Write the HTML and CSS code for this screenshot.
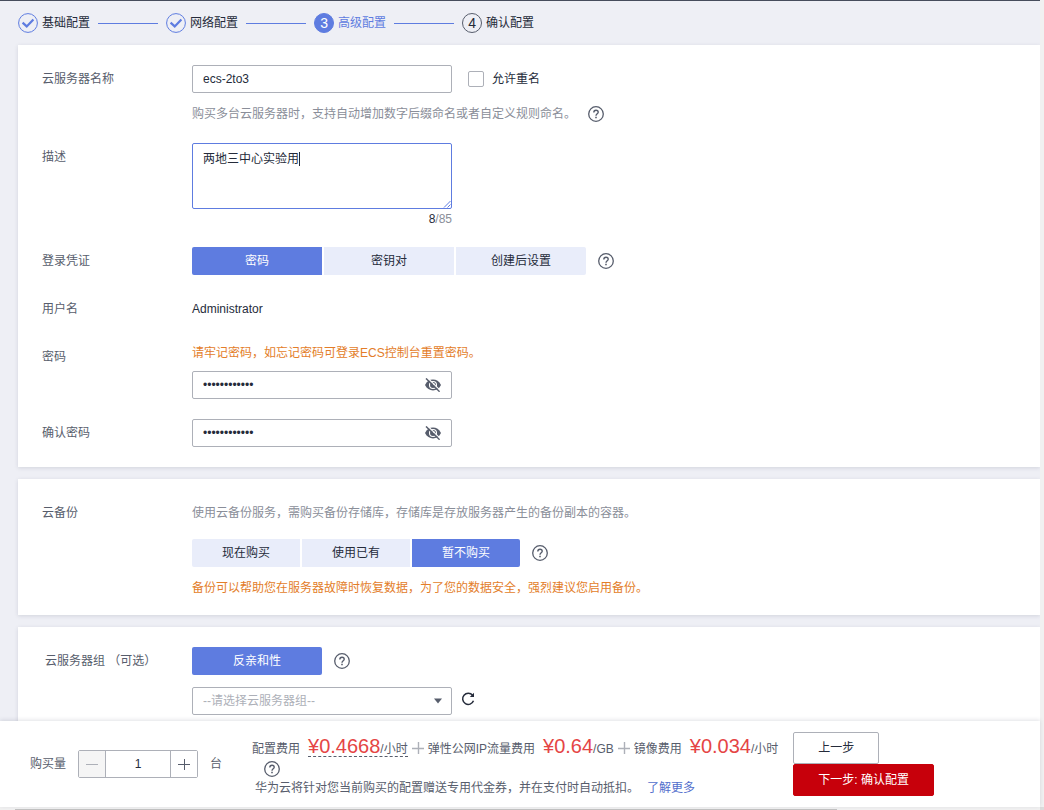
FILE: index.html
```html
<!DOCTYPE html>
<html lang="zh-CN">
<head>
<meta charset="utf-8">
<title>高级配置</title>
<link rel="stylesheet" href="styles.css">
</head>
<body>
<svg class="sprite" aria-hidden="true">
  <symbol id="help" viewBox="0 0 16 16">
    <circle cx="8" cy="8" r="7.3" fill="none" stroke="currentColor" stroke-width="1.3"/>
    <path d="M5.8 6.4C5.8 5 6.7 4.2 8 4.2S10.200 5 10.200 6.200C10.200 7.700 8 7.800 8 9.700" fill="none" stroke="currentColor" stroke-width="1.4"/>
    <path d="M7.200 10.800h1.600v1.500H7.200z" fill="currentColor"/>
  </symbol>
  <symbol id="check" viewBox="0 0 20 20">
    <circle cx="10" cy="10" r="9.400" fill="none" stroke="currentColor" stroke-width="1"/>
    <path d="M4.600 9.600L8.700 13.400L15.400 6.400" fill="none" stroke="currentColor" stroke-width="2.200"/>
  </symbol>
  <symbol id="eye-off" viewBox="0 0 16 14">
    <path d="M0 7C1.800 3.300 4.700 1.600 8 1.600S14.200 3.300 16 7C14.200 10.700 11.300 12.400 8 12.400S1.800 10.700 0 7z" fill="currentColor"/>
    <circle cx="8" cy="7" r="3.500" fill="none" stroke="#fff" stroke-width="1.100"/>
    <circle cx="8.800" cy="6.200" r="1" fill="#fff"/>
    <path d="M2.600 0L15.400 12.600" stroke="#fff" stroke-width="1.200"/>
    <path d="M1 .4L14.600 13.700" stroke="currentColor" stroke-width="1.400"/>
  </symbol>
</svg>
<div class="screen">
  <div class="view">
    <main class="content">
      <ol class="steps">
        <li class="step"><svg class="step-icon"><use href="#check"/></svg>基础配置</li>
        <li class="step"><svg class="step-icon"><use href="#check"/></svg>网络配置</li>
        <li class="step step-current"><span class="step-number">3</span>高级配置</li>
        <li class="step step-next"><span class="step-number">4</span>确认配置</li>
      </ol>

      <section class="card">
        <div class="row row-tight">
          <label class="label" for="name">云服务器名称</label>
          <div class="field">
            <div class="line">
              <input class="input" id="name" type="text" value="ecs-2to3">
              <input class="checkbox" id="dup" type="checkbox">
              <label class="checkbox-label" for="dup">允许重名</label>
            </div>
            <p class="hint">购买多台云服务器时，支持自动增加数字后缀命名或者自定义规则命名。<svg class="help"><use href="#help"/></svg></p>
          </div>
        </div>
        <div class="row row-tight">
          <label class="label" for="desc">描述</label>
          <div class="field">
            <div class="textarea-box">
              <textarea class="textarea" id="desc">两地三中心实验用</textarea>
              <span class="caret"></span>
              <svg class="grip" viewBox="0 0 8 8"><path d="M1 7.500L7.500 1M4.500 7.500L7.500 4.500" stroke="#5e7ce0" fill="none"/></svg>
            </div>
            <p class="counter"><span class="count">8</span>/85</p>
          </div>
        </div>
        <div class="row">
          <span class="label">登录凭证</span>
          <div class="field line">
            <div class="segments">
              <button class="segment segment-wide segment-on" type="button">密码</button>
              <button class="segment segment-wide" type="button">密钥对</button>
              <button class="segment segment-wide" type="button">创建后设置</button>
            </div>
            <svg class="help"><use href="#help"/></svg>
          </div>
        </div>
        <div class="row">
          <span class="label">用户名</span>
          <div class="field value">Administrator</div>
        </div>
        <div class="row">
          <label class="label" for="pwd">密码</label>
          <div class="field">
            <p class="warn warn-top">请牢记密码，如忘记密码可登录ECS控制台重置密码。</p>
            <div class="password">
              <input class="input" id="pwd" type="password" value="Abcdef123456">
              <svg class="eye"><use href="#eye-off"/></svg>
            </div>
          </div>
        </div>
        <div class="row">
          <label class="label" for="pwd2">确认密码</label>
          <div class="field">
            <div class="password">
              <input class="input" id="pwd2" type="password" value="Abcdef123456">
              <svg class="eye"><use href="#eye-off"/></svg>
            </div>
          </div>
        </div>
      </section>

      <section class="card card-backup">
        <div class="row">
          <span class="label">云备份</span>
          <div class="field">
            <p class="intro">使用云备份服务，需购买备份存储库，存储库是存放服务器产生的备份副本的容器。</p>
            <div class="line">
              <div class="segments">
                <button class="segment" type="button">现在购买</button>
                <button class="segment" type="button">使用已有</button>
                <button class="segment segment-on" type="button">暂不购买</button>
              </div>
              <svg class="help"><use href="#help"/></svg>
            </div>
            <p class="hint warn">备份可以帮助您在服务器故障时恢复数据，为了您的数据安全，强烈建议您启用备份。</p>
          </div>
        </div>
      </section>

      <section class="card">
        <div class="row">
          <label class="label label-indent" for="group">云服务器组 （可选）</label>
          <div class="field">
            <div class="line group-policy">
              <button class="segment segment-wide segment-on" type="button">反亲和性</button>
              <svg class="help"><use href="#help"/></svg>
            </div>
            <div class="line">
              <div class="select-box">
                <select class="input select" id="group"><option>--请选择云服务器组--</option></select>
                <svg class="arrow" viewBox="0 0 8 6"><path d="M0 .5h8L4 5.500z" fill="#575d6c"/></svg>
              </div>
              <button class="refresh" type="button" aria-label="刷新"><svg viewBox="0 0 14 14"><path d="M11.600 3.300A5.600 5.600 0 1 0 12.500 8.800" fill="none" stroke="#252b3a" stroke-width="1.500"/><path d="M13 .8V5H8.800z" fill="#252b3a"/></svg></button>
            </div>
          </div>
        </div>
      </section>
    </main>

    <footer class="footer">
      <div class="quantity">
        <label for="qty">购买量</label>
        <div class="stepper">
          <button class="stepper-button stepper-off" type="button" aria-label="减少"><svg viewBox="0 0 12 12"><path d="M0 6.500h12" stroke="#adb0b8" stroke-width="1"/></svg></button>
          <input class="stepper-input" id="qty" type="text" value="1">
          <button class="stepper-button" type="button" aria-label="增加"><svg viewBox="0 0 12 12"><path d="M0 6.500h12M6.500 1v11" stroke="#575d6c" stroke-width="1"/></svg></button>
        </div>
        <span>台</span>
      </div>
      <div class="costs">
        <div class="prices">
          <span class="price-name">配置费用</span><span class="price price-detail"><span class="amount">¥0.4668</span>/小时</span>
          <svg class="plus" viewBox="0 0 12 12"><path d="M0 6.500h12M6.500 0v12" stroke="#adb0b8" stroke-width="1.400"/></svg>
          <span class="price-name">弹性公网IP流量费用</span><span class="price"><span class="amount">¥0.64</span>/GB</span>
          <svg class="plus" viewBox="0 0 12 12"><path d="M0 6.500h12M6.500 0v12" stroke="#adb0b8" stroke-width="1.400"/></svg>
          <span class="price-name">镜像费用</span><span class="price"><span class="amount">¥0.034</span>/小时</span>
        </div>
        <svg class="help costs-help"><use href="#help"/></svg>
        <p class="coupon">华为云将针对您当前购买的配置赠送专用代金券，并在支付时自动抵扣。<a class="link" href="#more">了解更多</a></p>
      </div>
      <div class="actions">
        <button class="action" type="button">上一步</button>
        <button class="action action-primary" type="button">下一步: 确认配置</button>
      </div>
    </footer>
  </div>
  <div class="scroll-y"></div>
  <div class="scroll-x"><div class="thumb"></div></div>
  <div class="scroll-corner"></div>
</div>
</body>
</html>
```
FILE: styles.css
```css
* { box-sizing: border-box; }

body {
  margin: 0;
  background: #eeeff5;
  color: #252b3a;
  font-family: "Liberation Sans", "Noto Sans CJK SC", sans-serif;
  font-size: 12px;
  line-height: 20px;
}

p, ol { margin: 0; padding: 0; }

button, input, textarea, select {
  margin: 0;
  font: inherit;
  color: inherit;
  outline: none;
}

svg { display: block; flex: none; }

.sprite { position: absolute; width: 0; height: 0; }

/* Page frame */
.screen {
  display: grid;
  grid-template-columns: minmax(0, 1fr) 4px;
  grid-template-rows: minmax(0, 1fr) 3px;
  height: 100vh;
}

.view {
  display: flex;
  flex-direction: column;
  border-top: 1px solid #464c5c;
}

.content {
  flex: 1;
  min-height: 0;
  overflow: hidden;
  padding: 12px 0 0 18px;
}

.scroll-y { background: #f1f1f1; }
.scroll-x { padding-top: 2px; background: #f1f1f1; }
.thumb { width: 79%; height: 1px; margin-left: 15px; background: #c1c1c1; }
.scroll-corner { background: #dcdcdc; }

/* Steps */
.steps {
  display: flex;
  margin-bottom: 12px;
  list-style: none;
}

.step { display: flex; align-items: center; gap: 4px; }

.step:not(:last-child)::after {
  content: "";
  width: 60px;
  height: 1px;
  margin: 0 8px 0 4px;
  background: #5e7ce0;
}

.step-icon { width: 20px; height: 20px; color: #5e7ce0; }

.step-number {
  width: 20px;
  height: 20px;
  border: 1px solid #575d6c;
  border-radius: 50%;
  font-size: 14px;
  line-height: 18px;
  text-align: center;
}

.step-current { color: #5e7ce0; }
.step-current .step-number { border-color: #5e7ce0; background: #5e7ce0; color: #fff; }

/* Cards and form rows */
.card {
  margin-bottom: 12px;
  padding: 20px 24px;
  background: #fff;
  box-shadow: 0 1px 4px rgba(40, 50, 80, 0.14);
}

.card-backup { padding-bottom: 16px; }

.row { display: flex; margin-bottom: 20px; }
.row-tight { margin-bottom: 18px; }
.row:last-child { margin-bottom: 0; }

.label { flex: none; width: 150px; color: #575d6c; line-height: 28px; }
.label-indent { padding-left: 3px; }
.field { flex: 1; min-width: 0; }
.line { display: flex; align-items: center; }
.value { line-height: 28px; }

.input {
  display: block;
  width: 260px;
  height: 28px;
  padding: 0 10px;
  border: 1px solid #adb0b8;
  border-radius: 2px;
  background: #fff;
}

.checkbox {
  width: 16px;
  height: 16px;
  margin-left: 16px;
  border: 1px solid #adb0b8;
  border-radius: 2px;
  background: #fff;
  appearance: none;
}

.checkbox-label { margin-left: 8px; }

.hint {
  display: flex;
  align-items: center;
  margin-top: 10px;
  color: #8a8e99;
  line-height: 22px;
}

.help { width: 16px; height: 16px; margin-left: 12px; color: #575d6c; }

.warn { color: #e37d29; }
.warn-top { margin-bottom: 8px; }

.intro { margin-bottom: 12px; color: #8a8e99; line-height: 28px; }

.textarea-box { position: relative; width: 260px; }

.textarea {
  display: block;
  width: 100%;
  height: 66px;
  padding: 5px 10px;
  border: 1px solid #5e7ce0;
  border-radius: 2px;
  background: #fff;
  resize: none;
}

.caret {
  position: absolute;
  top: 9px;
  left: 107px;
  width: 1px;
  height: 14px;
  background: #252b3a;
}

.grip { position: absolute; right: 1px; bottom: 1px; width: 8px; height: 8px; }

.counter { width: 260px; color: #8a8e99; text-align: right; }
.count { color: #252b3a; }

.segments { display: flex; gap: 2px; }

.segment {
  width: 108px;
  height: 28px;
  padding: 0;
  border: 0;
  border-radius: 2px;
  background: #e9edfa;
}

.segments .segment { border-radius: 0; }
.segments .segment:first-child { border-radius: 2px 0 0 2px; }
.segments .segment:last-child { border-radius: 0 2px 2px 0; }

.segment-wide { width: 130px; }
.segment-on { background: #5e7ce0; color: #fff; }

.password, .select-box { position: relative; width: 260px; }
.eye { position: absolute; top: 7px; right: 11px; width: 16px; height: 14px; color: #575d6c; }

.group-policy { margin-bottom: 12px; }
.select { color: #adb0b8; appearance: none; }
.arrow { position: absolute; top: 11px; right: 10px; width: 8px; height: 6px; pointer-events: none; }

.refresh { margin: 0 0 4px 9px; padding: 0; border: 0; background: none; }
.refresh svg { width: 14px; height: 14px; }

/* Purchase bar */
.footer {
  position: relative;
  display: flex;
  align-items: flex-start;
  padding: 11px 16px 9px 30px;
  background: #fff;
  color: #575d6c;
  box-shadow: 0 -1px 4px rgba(40, 50, 80, 0.14);
}

.quantity {
  display: flex;
  align-items: center;
  gap: 12px;
  height: 64px;
  margin-right: 30px;
}

.stepper {
  display: flex;
  width: 120px;
  height: 28px;
  border: 1px solid #adb0b8;
  border-radius: 2px;
}

.stepper-button {
  display: flex;
  align-items: center;
  justify-content: center;
  width: 26px;
  padding: 0;
  border: 0;
  background: #fff;
}

.stepper-off { background: #f5f5f5; }
.stepper-button svg { width: 12px; height: 12px; }

.stepper-input {
  flex: 1;
  min-width: 0;
  padding: 0;
  border: solid #adb0b8;
  border-width: 0 1px;
  background: #fff;
  color: #252b3a;
  text-align: center;
}

.costs { margin-right: 15px; }
.prices { display: flex; align-items: baseline; height: 28px; padding: 7px 0 4px; }
.price-name { margin-right: 8px; }
.price { line-height: 14px; }
.price-detail { border-bottom: 1px dashed #575d6c; }
.amount { color: #e54545; font-size: 20px; }
.plus { align-self: center; width: 12px; height: 12px; margin: 0 4px; }
.costs-help { margin: 1px 0 1px 12px; }
.coupon { padding-left: 3px; }
.link { margin-left: 8px; color: #526ecc; text-decoration: none; }

.actions { display: flex; flex: 1; flex-direction: column; align-items: flex-start; }

.action {
  height: 32px;
  padding: 0 24px;
  border: 1px solid #adb0b8;
  border-radius: 2px;
  background: #fff;
  color: #252b3a;
}

.action-primary { border-color: #c7000b; background: #c7000b; color: #fff; }
```
